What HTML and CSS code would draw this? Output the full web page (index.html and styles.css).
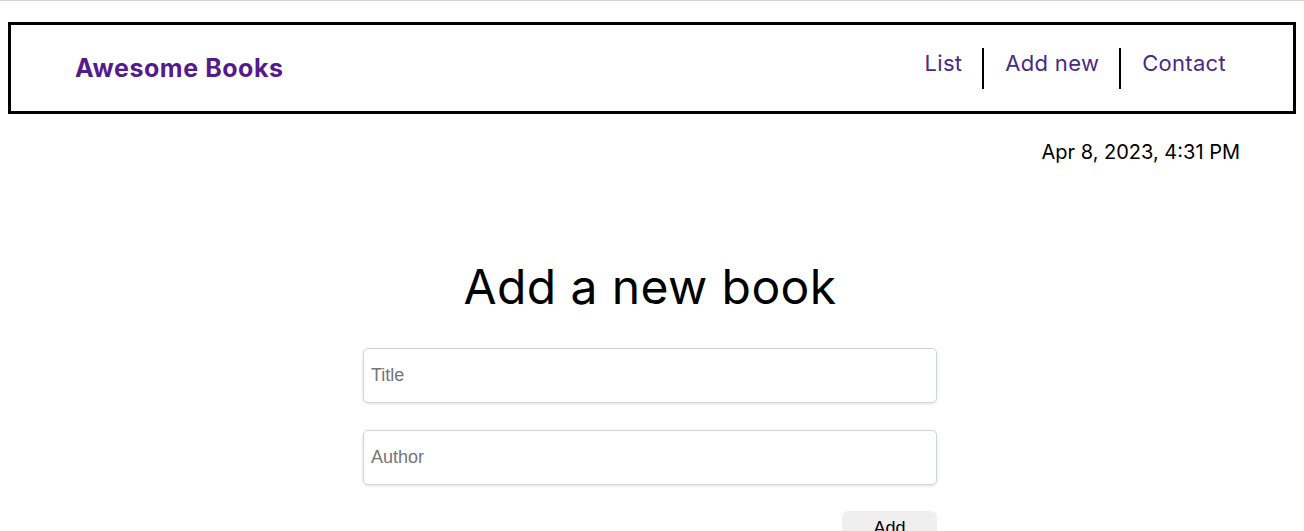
FILE: index.html
```html
<!DOCTYPE html>
<html lang="en">
<head>
<meta charset="utf-8">
<title>Awesome Books</title>
<link rel="stylesheet" href="styles.css">
</head>
<body>
<div class="topline"></div>
<header class="header">
  <h1 class="logo">Awesome Books</h1>
  <nav>
    <ul class="nav">
      <li class="nav-item"><a href="#">List</a></li>
      <li class="nav-item"><a href="#">Add new</a></li>
      <li class="nav-item last"><a href="#">Contact</a></li>
    </ul>
  </nav>
</header>
<p class="date">Apr 8, 2023, 4:31 PM</p>
<main class="add-section">
  <h2 class="section-title">Add a new book</h2>
  <form class="form">
    <input class="field" type="text" placeholder="Title">
    <input class="field" type="text" placeholder="Author">
    <div class="actions"><button class="add-btn" type="button">Add</button></div>
  </form>
</main>
</body>
</html>
```
FILE: styles.css
```css
* { box-sizing: border-box; }
html, body { margin: 0; padding: 0; }
body {
  font-family: "Inter", "DejaVu Sans", sans-serif;
  background: #fff;
  color: #000;
  overflow: hidden;
}
.topline {
  height: 1px;
  background: #d4d4d4;
  margin-bottom: 21px;
}
.header {
  margin: 0 8px;
  height: 92px;
  border: 3px solid #000;
  display: flex;
  align-items: center;
  justify-content: space-between;
  padding: 0 47px 0 64px;
}
.logo {
  margin: 0;
  font-size: 25px;
  font-weight: 700;
  color: #551a8b;
  letter-spacing: 0.55px;
}
.nav {
  list-style: none;
  margin: 0;
  padding: 0;
  display: flex;
}
.nav-item {
  height: 41px;
  padding: 0 20px 0 21px;
  border-right: 2px solid #000;
  line-height: 30px;
  font-size: 22px;
  letter-spacing: 0.3px;
}
.nav-item.last { border-right: none; }
.nav-item a {
  color: #4a2a86;
  text-decoration: none;
}
.date {
  margin: 23px 64px 0 0;
  text-align: right;
  font-size: 20px;
  line-height: 30px;
}
.add-section {
  margin-top: 90px;
  display: flex;
  flex-direction: column;
  align-items: center;
  padding-right: 4px;
}
.section-title {
  margin: 0 0 31px;
  font-size: 48px;
  font-weight: 400;
  line-height: 60px;
  letter-spacing: 0.4px;
}
.form {
  width: 574px;
  display: flex;
  flex-direction: column;
  gap: 27px;
}
.field {
  height: 55px;
  border: 1px solid #cfd6da;
  border-radius: 5px;
  box-shadow: 0 1px 3px rgba(0,0,0,0.12);
  padding: 0 7px;
  font-family: "Liberation Sans", Arial, sans-serif;
  font-size: 18px;
  color: #000;
}
.field::placeholder { color: #757575; }
.actions {
  display: flex;
  justify-content: flex-end;
  margin-top: -1px;
}
.add-btn {
  width: 95px;
  height: 40px;
  border: none;
  border-radius: 6px;
  background: #efefef;
  font-family: "Liberation Sans", Arial, sans-serif;
  font-size: 18px;
  color: #000;
  padding: 7px 0 0;
  display: flex;
  justify-content: center;
  align-items: flex-start;
}
```
